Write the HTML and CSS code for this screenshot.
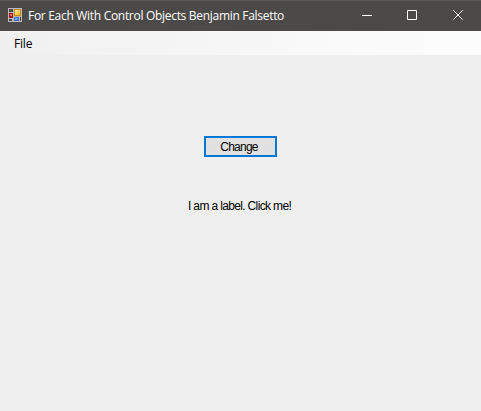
FILE: index.html
```html
<!DOCTYPE html>
<html lang="en">
<head>
<meta charset="utf-8">
<title>For Each With Control Objects Benjamin Falsetto</title>
<link rel="stylesheet" href="styles.css">
</head>
<body>
<div class="window">
  <header class="titlebar">
    <svg class="app-icon" width="14" height="14" viewBox="0 0 14 14" shape-rendering="crispEdges">
      <defs>
        <linearGradient id="gold" x2="1" y2="1"><stop stop-color="#fff3a8"/><stop offset="1" stop-color="#efaa10"/></linearGradient>
        <linearGradient id="blue" x2="1" y2="1"><stop stop-color="#a5ccff"/><stop offset="1" stop-color="#3977dc"/></linearGradient>
      </defs>
      <path fill="#b9b9b9" d="M0 0h14v14H0z"/>
      <path fill="#4c4a48" d="M1 1h4v3H1zM1 11h3v2H1zM12 9h1v4h-1z"/>
      <path fill="#a90f12" d="M1 5h4v5H1z"/>
      <path fill="#e96a60" d="M2 6h2v2H2z"/>
      <path fill="#c48a13" d="M6 1h7v7H6z"/>
      <path fill="url(#gold)" d="M7 2h5v5H7z"/>
      <path fill="#3c70c8" d="M6 9h5v4H6z"/>
      <path fill="url(#blue)" d="M7 10h3v2H7z"/>
    </svg>
    <span class="title">For Each With Control Objects Benjamin Falsetto</span>
    <div class="controls">
      <svg class="minimize" width="10" height="10" viewBox="0 0 10 10"><path d="M0 5.5h10"/></svg>
      <svg width="10" height="10" viewBox="0 0 10 10"><path d="M.5.5h9v9h-9z"/></svg>
      <svg width="10" height="10" viewBox="0 0 10 10"><path d="M.3.3l9.4 9.4M9.7.3L.3 9.7"/></svg>
    </div>
  </header>
  <nav class="menubar"><span>File</span></nav>
  <main class="form">
    <button class="change">Change</button>
    <div class="label">I am a label. Click me!</div>
  </main>
</div>
</body>
</html>
```
FILE: styles.css
```css
body { margin: 0; }
.window {
  display: flex;
  flex-direction: column;
  height: 411px;
  background: #efefef;
  color: #000;
  font-family: "Open Sans", "Noto Sans", sans-serif;
  font-size: 12px;
}
.titlebar {
  display: flex;
  align-items: center;
  box-sizing: border-box;
  height: 31px;
  padding: 0 18px 2px 8px;
  border-top: 1px solid #5d5c5a;
  background: #4c4a48;
  color: #fff;
}
.app-icon { margin-right: 6px; }
.title { padding-top: 2px; white-space: nowrap; line-height: 18px; letter-spacing: -0.3px; }
.controls { display: flex; gap: 36px; margin-left: auto; }
.controls svg { fill: none; stroke: #fff; stroke-width: 1; }
.controls .minimize { margin-right: -1px; }
.menubar {
  display: flex;
  align-items: center;
  height: 24px;
  padding-left: 14px;
  background: linear-gradient(90deg, #f0f0f0, #fcfcfc 90%);
  letter-spacing: -0.2px;
}
.form {
  display: flex;
  flex-direction: column;
  align-items: flex-start;
  padding: 81px 0 0 188px;
  font-family: "Liberation Sans", sans-serif;
  font-size: 12px;
}
.change {
  width: 73px;
  height: 21px;
  margin: 0 0 42px 16px;
  padding: 1px 3px 0 0;
  border: 2px solid #0078d7;
  background: #e1e1e1;
  color: #000;
  font: inherit;
  line-height: 17px;
  letter-spacing: -0.75px;
}
.label { line-height: 14px; white-space: nowrap; letter-spacing: -0.65px; }
```
